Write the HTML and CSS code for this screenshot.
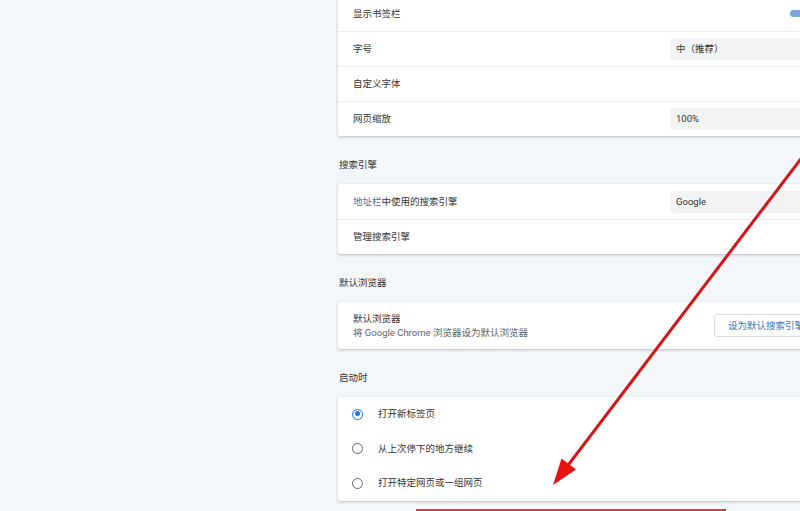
FILE: index.html
```html
<!DOCTYPE html>
<html>
	<head>
		<meta charset="utf-8">
		<title>设置</title>
		<link rel="stylesheet" href="styles.css">
	</head>
	<body>
		<div id="wrap">
			<div class="column">
				<div class="card">
					<div class="row"><span class="label">显示书签栏</span><span class="toggle"></span></div>
					<div class="row"><span class="label">字号</span><span class="select">中（推荐）</span></div>
					<div class="row"><span class="label">自定义字体</span></div>
					<div class="row"><span class="label">网页缩放</span><span class="select">100%</span></div>
				</div>

				<div class="heading">搜索引擎</div>
				<div class="card">
					<div class="row"><span class="label"><span class="link">地址栏</span>中使用的搜索引擎</span><span class="select">Google</span></div>
					<div class="row"><span class="label">管理搜索引擎</span></div>
				</div>

				<div class="heading">默认浏览器</div>
				<div class="card">
					<div class="row tall">
						<div class="label">
							<div>默认浏览器</div>
							<div class="sub">将 Google Chrome 浏览器设为默认浏览器</div>
						</div>
						<span class="btn">设为默认搜索引擎</span>
					</div>
				</div>

				<div class="heading">启动时</div>
				<div class="card">
					<div class="row plain"><span class="radio checked"></span><span class="label">打开新标签页</span></div>
					<div class="row plain"><span class="radio"></span><span class="label">从上次停下的地方继续</span></div>
					<div class="row plain"><span class="radio"></span><span class="label">打开特定网页或一组网页</span></div>
				</div>
			</div>

			<!-- 标注：红色箭头和红框 -->
			<svg class="arrow" width="800" height="511" viewBox="0 0 800 511">
				<line x1="806" y1="152" x2="569" y2="464" stroke="#d21717" stroke-width="3" stroke-linecap="round"/>
				<polygon points="553,485 561.5,458.5 576,469.5" fill="#e81212"/>
			</svg>
			<div class="mark"></div>
		</div>
	</body>
</html>
```

FILE: styles.css
```css
html, body {
	margin: 0;
	height: 100%;
	overflow: hidden;
}
body {
	background-color: #f4f7fa;
	font-family: Roboto, "Noto Sans CJK SC", sans-serif;
	font-size: 9.5px;
	color: #333;
}
#wrap {
	width: 800px;
	height: 511px;
	position: relative;
	overflow: hidden;
}
.column {
	width: 500px;
	margin: -4px 0 0 338px;
}
.card {
	background-color: #fff;
	border-radius: 2px;
	box-shadow: 0 1px 2px rgba(60,64,67,.22), 0 1px 3px 1px rgba(60,64,67,.08);
}
.row {
	height: 35px;
	box-sizing: border-box;
	display: flex;
	align-items: center;
	padding: 0 20px 0 15px;
	border-top: 1px solid #ebedf0;
}
.row:first-child {
	border-top: none;
}
.row.tall {
	height: 47px;
}
.row.plain {
	border-top: none;
	height: 34.5px;
}
.label {
	flex: 1;
	line-height: 14px;
}
.link {
	color: #3f6fb5;
}
.sub {
	color: #5f6368;
}
.heading {
	line-height: 16px;
	padding: 21px 0 11px 1px;
}
.select {
	width: 142px;
	height: 22px;
	line-height: 22px;
	padding-left: 6px;
	background-color: #f1f3f4;
	border-radius: 3px;
	color: #333;
}
.toggle {
	width: 28px;
	height: 7px;
	border-radius: 4px;
	background-color: #7ba6e0;
}
.btn {
	height: 23px;
	line-height: 21px;
	box-sizing: border-box;
	padding: 0 13px;
	border: 1px solid #dadce0;
	border-radius: 3px;
	color: #3a6fb8;
	white-space: nowrap;
}
.radio {
	width: 11px;
	height: 11px;
	box-sizing: border-box;
	border: 1.5px solid #5f6368;
	border-radius: 50%;
	margin-right: 15px;
	margin-left: -1px;
	position: relative;
}
.radio.checked {
	border-color: #1a73e8;
}
.radio.checked::after {
	content: "";
	position: absolute;
	left: 1.5px;
	top: 1.5px;
	width: 5px;
	height: 5px;
	border-radius: 50%;
	background-color: #1a73e8;
}
.arrow {
	position: absolute;
	left: 0;
	top: 0;
}
.mark {
	position: absolute;
	left: 416px;
	top: 509px;
	width: 306px;
	height: 40px;
	border: 2px solid #e23a3a;
}
```
